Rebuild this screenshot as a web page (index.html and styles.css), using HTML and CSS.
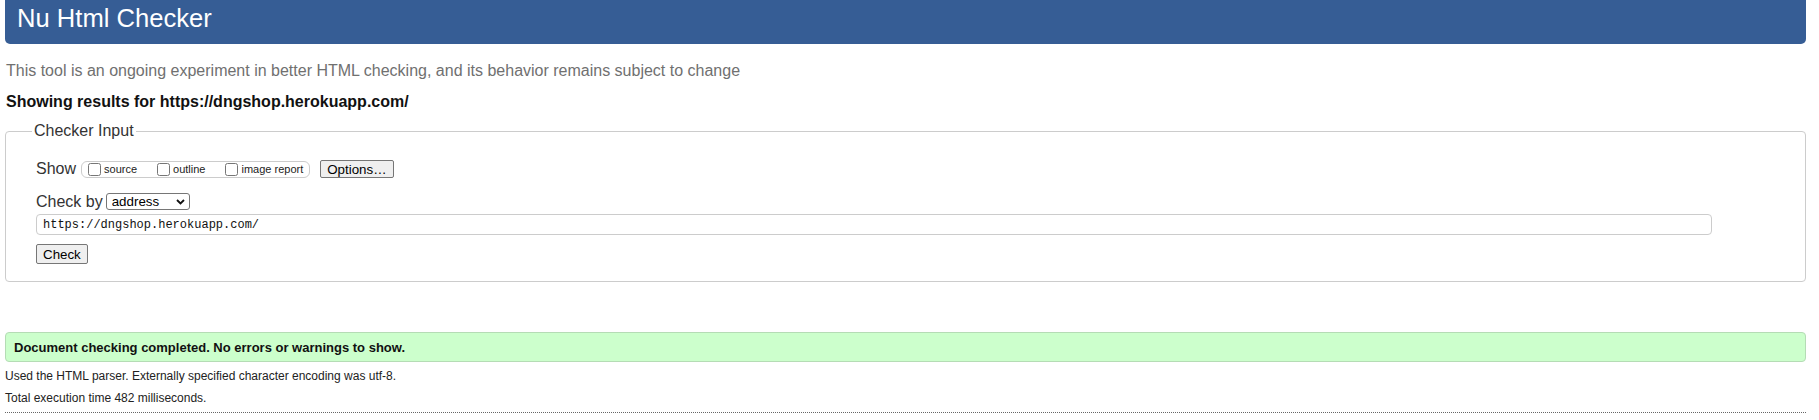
FILE: index.html
```html
<!DOCTYPE html>
<html lang="en">
<head>
<meta charset="utf-8">
<title>Nu Html Checker</title>
<link rel="stylesheet" href="styles.css">
</head>
<body>
<h1 class="title">Nu Html Checker</h1>
<p class="tagline">This tool is an ongoing experiment in better HTML checking, and its behavior remains subject to change</p>
<p class="showing">Showing results for https://dngshop.herokuapp.com/</p>
<form class="checker">
  <fieldset class="input-box">
    <legend class="input-legend">Checker Input</legend>
    <div class="row row-show">
      <span class="row-label">Show</span>
      <span class="opts">
        <label class="opt"><input type="checkbox" class="cb"><span>source</span></label>
        <label class="opt"><input type="checkbox" class="cb"><span>outline</span></label>
        <label class="opt"><input type="checkbox" class="cb"><span>image report</span></label>
      </span>
      <button type="button" class="btn btn-options">Options…</button>
    </div>
    <div class="row row-by">
      <span class="row-label">Check by</span>
      <span class="select-wrap">
        <select class="sel"><option>address</option></select>
        <svg class="chev" width="9" height="6" viewBox="0 0 9 6"><path d="M1 1 L4.5 4.5 L8 1" fill="none" stroke="#111" stroke-width="1.8"/></svg>
      </span>
    </div>
    <div class="row row-url">
      <input class="url" type="text" value="https://dngshop.herokuapp.com/">
    </div>
    <div class="row row-check">
      <button type="button" class="btn btn-check">Check</button>
    </div>
  </fieldset>
</form>
<div class="success">Document checking completed. No errors or warnings to show.</div>
<p class="info">Used the HTML parser. Externally specified character encoding was utf-8.</p>
<p class="info">Total execution time 482 milliseconds.</p>
<div class="rule"></div>
</body>
</html>
```
FILE: styles.css
```css
html { background: #fff; }
body {
  margin: 0;
  padding: 0 13px 0 5px;
  font-family: "Liberation Sans", Arial, sans-serif;
  color: #222;
}
.title {
  margin: 0;
  font-size: 25.6px;
  line-height: 29px;
  font-weight: normal;
  color: #fff;
  background: #365d95;
  padding: 4px 12px 11px;
  border-radius: 0 0 5px 5px;
}
.tagline {
  margin: 18px 0 0 1px;
  font-size: 16px;
  line-height: 18px;
  color: #707070;
}
.showing {
  margin: 13px 0 0 1px;
  font-size: 16px;
  line-height: 18px;
  font-weight: bold;
  color: #111;
}
.checker { margin: 11px 0 0; }
.input-box {
  margin: 0;
  border: 1px solid #ccc;
  border-radius: 4px;
  padding: 20px 30px 17px 30px;
}
.input-legend {
  font-size: 16px;
  line-height: 18px;
  padding: 0 2px;
  margin-left: -4px;
  color: #333;
}
.row { display: flex; align-items: center; }
.row-show { height: 18px; }
.row-label {
  font-size: 16px;
  line-height: 18px;
  color: #333;
}
.opts {
  display: flex;
  align-items: center;
  height: 15px;
  margin-left: 5px;
  border: 1px solid #ccc;
  border-radius: 6px;
  padding: 0 6px 0 6px;
  gap: 20px;
}
.opt {
  display: flex;
  align-items: center;
  font-size: 11px;
  color: #222;
}
.cb {
  width: 13px;
  height: 13px;
  margin: 0 3px 0 0;
}
.btn {
  font-family: "Liberation Sans", Arial, sans-serif;
  font-size: 13.33px;
  color: #000;
  background: #efefef;
  border: 1px solid #767676;
  border-radius: 2px;
  padding: 0 6px;
}
.btn-options { height: 18px; margin-left: 10px; }
.row-by { height: 19px; margin-top: 14px; }
.select-wrap {
  position: relative;
  display: inline-block;
  margin-left: 3px;
  height: 17px;
}
.sel {
  appearance: none;
  -webkit-appearance: none;
  width: 84px;
  height: 17px;
  border: 1px solid #767676;
  border-radius: 3px;
  background: #fff;
  font-family: "Liberation Sans", Arial, sans-serif;
  font-size: 13.33px;
  color: #000;
  padding: 0 0 0 5px;
  margin: 0;
  display: block;
}
.chev {
  position: absolute;
  right: 5px;
  top: 6px;
  pointer-events: none;
}
.row-url { margin-top: 3px; }
.url {
  width: calc(100% - 63px);
  height: 21px;
  box-sizing: border-box;
  border: 1px solid #ccc;
  border-radius: 4px;
  padding: 0 6px;
  margin: 0;
  font-family: "Liberation Mono", "Courier New", monospace;
  font-size: 12px;
  color: #111;
}
.row-check { margin-top: 9px; }
.btn-check { height: 20px; }
.success {
  margin-top: 50px;
  background: #ccffcc;
  border: 1px solid #b5dcb5;
  border-radius: 4px;
  padding: 7px 8px 6px;
  font-size: 13px;
  line-height: 15px;
  font-weight: bold;
  color: #111;
}
.info {
  margin: 0;
  font-size: 12px;
  line-height: 22px;
  color: #222;
}
.success + .info { margin-top: 3px; }
.rule {
  margin-top: 3px;
  border-top: 1px dotted #666;
}
```
